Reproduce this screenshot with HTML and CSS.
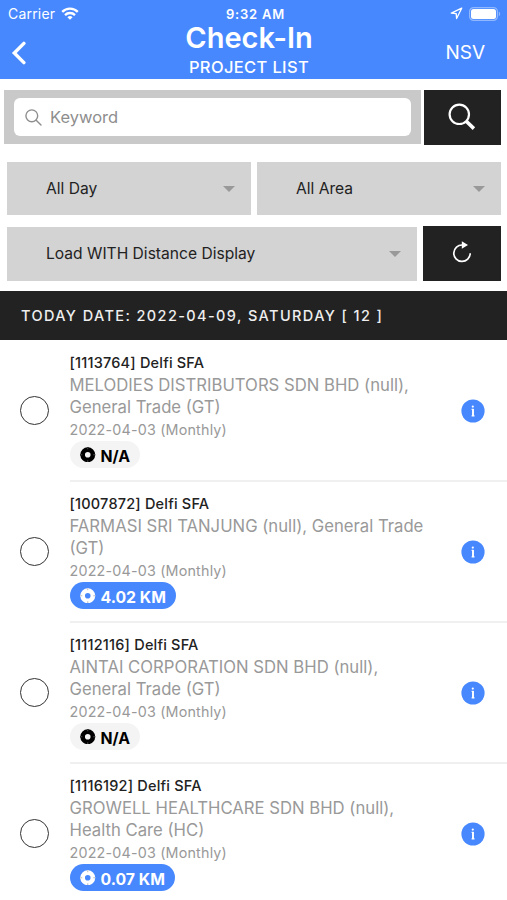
FILE: index.html
```html
<!DOCTYPE html>
<html lang="en">
<head>
    <meta charset="UTF-8">
    <meta name="viewport" content="width=device-width, initial-scale=1.0">
    <title>Check-In</title>
    <link rel="stylesheet" href="styles.css">
</head>
<body>
    <svg class="sprite" width="0" height="0">
        <symbol id="target" viewBox="0 0 16 16">
            <circle cx="8" cy="8" r="5.3" fill="none" stroke="currentColor" stroke-width="4.8" />
            <path d="M8 0v1.3M8 14.7V16M0 8h1.3M14.7 8H16" stroke="currentColor" stroke-width="1.6" />
            <path class="target-gap" d="M8 .2v2.1M8 13.7v2.1M.2 8h2.1M13.7 8h2.1" stroke-width=".6" />
        </symbol>
        <symbol id="info" viewBox="0 0 24 24">
            <circle cx="12" cy="12" r="11.6" fill="#4788ff" />
            <path d="M10.6 10.4H12v6.2M10.6 16.9h2.9" fill="none" stroke="#fff" stroke-width="1.2" />
            <path d="M12 10v7" stroke="#fff" stroke-width="1.8" />
            <circle cx="11.8" cy="7.6" r="1.1" fill="#fff" />
        </symbol>
    </svg>

    <header class="header">
        <div class="status-bar">
            <div class="carrier">
                <span>Carrier</span>
                <svg width="18" height="13" viewBox="0 0 18 13" fill="none" stroke="#fff" stroke-width="2.3">
                    <path d="M1.2 4.9a11 11 0 0 1 15.6 0M4 8.1a7 7 0 0 1 10 0" />
                    <path d="M9 12.8 6.4 10.2a3.8 3.8 0 0 1 5.2 0z" fill="#fff" stroke="none" />
                </svg>
            </div>
            <div class="time">9:32 AM</div>
            <div class="status-icons">
                <svg width="13" height="13" viewBox="0 0 13 13" fill="none" stroke="#fff" stroke-width="1.3" stroke-linejoin="round">
                    <path d="M11.7 1.2 1.3 6.1l4.9.5.4 4.9z" />
                </svg>
                <svg width="32" height="14" viewBox="0 0 32 14">
                    <rect x=".6" y=".6" width="27.8" height="12.8" rx="4" fill="none" stroke="#91b8ff" stroke-width="1.2" />
                    <rect x="2" y="2" width="25" height="10" rx="2.5" fill="#fff" />
                    <path d="M29.8 4.8c1.8.6 1.8 3.8 0 4.4z" fill="#91b8ff" />
                </svg>
            </div>
        </div>
        <div class="nav">
            <a class="back" href="#">
                <svg width="16" height="24" viewBox="0 0 16 24" fill="none" stroke="#fff" stroke-width="3.4" stroke-linecap="round">
                    <path d="M12.9 2.4 3.3 12l9.6 9.6" />
                </svg>
            </a>
            <div class="titles">
                <h1>Check-In</h1>
                <h2>PROJECT LIST</h2>
            </div>
            <a class="nsv" href="#">NSV</a>
        </div>
    </header>

    <div class="search-row">
        <div class="search-box">
            <label class="search-field">
                <svg width="17" height="17" viewBox="0 0 17 17" fill="none" stroke="#8e8e8e" stroke-width="1.4" stroke-linecap="round">
                    <circle cx="6.8" cy="6.8" r="5.9" />
                    <path d="m11.2 11.2 4.8 4.8" />
                </svg>
                <span>Keyword</span>
            </label>
        </div>
        <button class="dark-btn">
            <svg width="28" height="28" viewBox="0 0 28 28" fill="none" stroke="#fff">
                <circle cx="11.3" cy="11.3" r="9.7" stroke-width="2.2" />
                <path d="m18.3 18.3 7.6 7.3" stroke-width="3.6" />
            </svg>
        </button>
    </div>

    <div class="filter-row">
        <div class="select"><span>All Day</span><i class="caret"></i></div>
        <div class="select"><span>All Area</span><i class="caret"></i></div>
    </div>

    <div class="load-row">
        <div class="select"><span>Load WITH Distance Display</span><i class="caret"></i></div>
        <button class="dark-btn">
            <svg width="20" height="22" viewBox="0 0 20 22">
                <path d="M10.5 4A8.2 8.2 0 1 0 18.2 12.2" fill="none" stroke="#fff" stroke-width="1.7" />
                <path d="M9.8.3v7.4l6.2-3.6z" fill="#fff" />
            </svg>
        </button>
    </div>

    <div class="date-bar">TODAY DATE: 2022-04-09, SATURDAY [ 12 ]</div>

    <ul class="project-list">
        <li class="project">
            <span class="radio"></span>
            <div class="details">
                <div class="code">[1113764] Delfi SFA</div>
                <div class="name">MELODIES DISTRIBUTORS SDN BHD (null),<br>General Trade (GT)</div>
                <div class="date">2022-04-03 (Monthly)</div>
                <div class="badge"><svg class="target"><use href="#target" /></svg><span>N/A</span></div>
            </div>
            <svg class="info"><use href="#info" /></svg>
        </li>
        <li class="project">
            <span class="radio"></span>
            <div class="details">
                <div class="code">[1007872] Delfi SFA</div>
                <div class="name">FARMASI SRI TANJUNG (null), General Trade<br>(GT)</div>
                <div class="date">2022-04-03 (Monthly)</div>
                <div class="badge distance"><svg class="target"><use href="#target" /></svg><span>4.02 KM</span></div>
            </div>
            <svg class="info"><use href="#info" /></svg>
        </li>
        <li class="project">
            <span class="radio"></span>
            <div class="details">
                <div class="code">[1112116] Delfi SFA</div>
                <div class="name">AINTAI CORPORATION SDN BHD (null),<br>General Trade (GT)</div>
                <div class="date">2022-04-03 (Monthly)</div>
                <div class="badge"><svg class="target"><use href="#target" /></svg><span>N/A</span></div>
            </div>
            <svg class="info"><use href="#info" /></svg>
        </li>
        <li class="project">
            <span class="radio"></span>
            <div class="details">
                <div class="code">[1116192] Delfi SFA</div>
                <div class="name">GROWELL HEALTHCARE SDN BHD (null),<br>Health Care (HC)</div>
                <div class="date">2022-04-03 (Monthly)</div>
                <div class="badge distance"><svg class="target"><use href="#target" /></svg><span>0.07 KM</span></div>
            </div>
            <svg class="info"><use href="#info" /></svg>
        </li>
    </ul>
</body>
</html>
```
FILE: styles.css
```css
* {
    box-sizing: border-box;
}
body {
    margin: 0;
    height: 900px;
    overflow: hidden;
    background: #fff;
    font-family: Inter, "Liberation Sans", sans-serif;
    color: #222;
}
svg {
    display: block;
}
.sprite {
    position: absolute;
}
a {
    color: inherit;
    text-decoration: none;
}

/* Header */
.header {
    height: 79px;
    background: #4788ff;
    color: #fff;
}
.status-bar {
    display: grid;
    grid-template-columns: 1fr 100px 1fr;
    align-items: center;
    height: 24px;
    padding: 3px 6px 0 8px;
    font-size: 14px;
}
.carrier {
    display: flex;
    align-items: center;
    gap: 6px;
    letter-spacing: 0.2px;
}
.time {
    padding-left: 2px;
    text-align: center;
    font-size: 13px;
    font-weight: 600;
    letter-spacing: 0.8px;
    line-height: 16px;
}
.status-icons {
    display: flex;
    align-items: center;
    justify-content: flex-end;
    gap: 6px;
}
.nav {
    display: grid;
    grid-template-columns: 100px 1fr 109px;
    height: 55px;
}
.back {
    padding: 17px 0 0 11px;
}
.titles {
    text-align: center;
}
h1, h2 {
    margin: 0;
}
h1 {
    font-size: 29px;
    font-weight: 600;
    line-height: 27px;
}
h2 {
    margin-top: 5px;
    font-size: 16.5px;
    font-weight: 500;
    letter-spacing: 0.35px;
    line-height: 22px;
}
.nsv {
    padding: 18px 22px 0 0;
    text-align: right;
    font-size: 19px;
    line-height: 22px;
}

/* Search and filters */
.search-row {
    display: flex;
    gap: 3px;
    height: 55px;
    margin: 11px 6px 0 4px;
}
.search-box {
    flex: 1;
    height: 54px;
    padding: 8px 10px;
    background: #c9c9c9;
}
.search-field {
    display: flex;
    align-items: center;
    gap: 8px;
    height: 38px;
    padding-left: 11px;
    background: #fff;
    border-radius: 6px;
    color: #8e8e8e;
    font-size: 16.5px;
}
.dark-btn {
    display: flex;
    align-items: center;
    justify-content: center;
    width: 77px;
    height: 55px;
    padding: 0 2px 1px 0;
    background: #222;
    border: none;
}
.filter-row {
    display: grid;
    grid-template-columns: 1fr 1fr;
    gap: 6px;
    margin: 17px 6px 0 7px;
}
.select {
    display: flex;
    align-items: center;
    justify-content: space-between;
    height: 53px;
    padding: 0 16px 0 39px;
    background: #d3d3d3;
    font-size: 15.6px;
}
.select span {
    padding-bottom: 1px;
}
.caret {
    border: 6px solid transparent;
    border-top-color: #999;
    border-bottom: 0;
}
.load-row {
    display: flex;
    align-items: center;
    gap: 6px;
    height: 55px;
    margin: 11px 6px 0 7px;
}
.load-row .select {
    flex: 1;
    height: 54px;
}
.load-row .dark-btn {
    width: 78px;
    padding: 0 0 3px;
}
.date-bar {
    height: 49px;
    margin-top: 10px;
    padding-left: 21px;
    background: #222;
    color: #eee;
    font-size: 14.5px;
    font-weight: 500;
    letter-spacing: 1.4px;
    line-height: 49px;
}

/* Project list */
.project-list {
    margin: 0;
    padding: 1px 0 0;
    list-style: none;
}
.project {
    display: grid;
    grid-template-columns: 69.5px 1fr 46px;
    align-items: center;
    height: 141px;
    padding-bottom: 2px;
    background: linear-gradient(#f0f0f0, #f0f0f0) 70px 100% / 100% 2px no-repeat;
}
.radio {
    width: 29px;
    height: 29px;
    margin-left: 20px;
    border: 1.5px solid #333;
    border-radius: 50%;
}
.details {
    height: 139px;
    padding-top: 11px;
    white-space: nowrap;
}
.code {
    font-size: 14.5px;
    font-weight: 500;
    letter-spacing: 0.2px;
    line-height: 21px;
}
.name {
    padding-top: 1px;
    color: #999;
    font-size: 16.7px;
    line-height: 22px;
}
.date {
    color: #999;
    font-size: 14.3px;
    letter-spacing: 0.2px;
    line-height: 23px;
}
.badge {
    display: flex;
    align-items: center;
    gap: 5px;
    width: max-content;
    height: 27px;
    padding: 0 10px 0 10.5px;
    background: #f4f4f4;
    border-radius: 14px;
    color: #000;
    font-size: 15.8px;
    font-weight: 700;
}
.badge span {
    padding-top: 3px;
}
.target {
    width: 15.5px;
    height: 15.5px;
}
.target-gap {
    stroke: #888;
}
.badge.distance {
    background: #4788ff;
    color: #fff;
}
.info {
    width: 24px;
    height: 24px;
}
```
